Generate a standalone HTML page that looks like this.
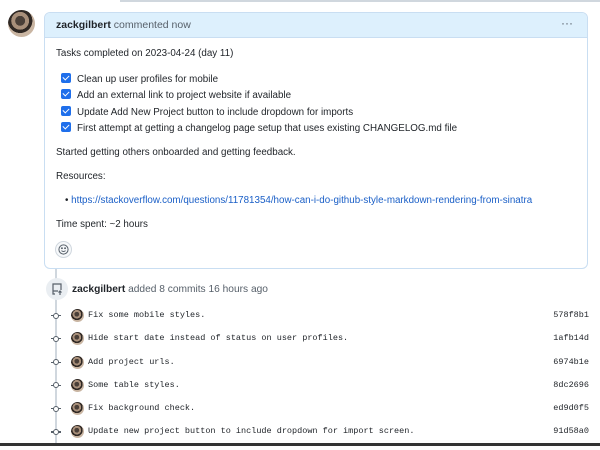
<!DOCTYPE html>
<html><head><style>
*{margin:0;padding:0;box-sizing:border-box}
body{width:600px;height:446px;background:#fff;font-family:"Liberation Sans",sans-serif;color:#1f2328;position:relative;overflow:hidden;font-size:9.8px}
.a{position:absolute}
.av{border-radius:50%;background:radial-gradient(circle at 45% 40%,#4a3f38 0 22%,#a88f7a 23% 40%,#2f2824 41% 55%,#c9b5a2 56% 75%,#8c7664 76%)}
.box{left:44px;top:12px;width:544px;height:257px;border:1px solid #c9def2;border-radius:6px;background:#fff}
.hd{left:0;top:0;right:0;height:25px;background:#ddf0fd;border-bottom:1px solid #c9def2;border-radius:5px 5px 0 0}
.cb{display:inline-block;width:10px;height:10px;background:#1f6feb;border-radius:2px;margin-right:6px;vertical-align:-1px;position:relative}
.cb:after{content:"";position:absolute;left:3px;top:1px;width:3px;height:5px;border:solid #fff;border-width:0 1.5px 1.5px 0;transform:rotate(45deg)}
.mono{font-family:"Liberation Mono",monospace;font-size:8.5px;color:#1f2328}
.r{position:relative;height:23.3px}
.ln{left:1px;top:5px;width:10px;height:1.2px;background:#57606a}
.ci{left:3px;top:2.5px;width:6px;height:6px;border:1.2px solid #57606a;border-radius:50%;background:#fff}
</style></head><body>
<div class="a" style="left:120px;top:0;width:480px;height:2px;background:#d0d7de"></div>
<div class="a av" style="left:8px;top:10px;width:27px;height:27px"></div>
<div class="a box">
 <div class="a hd"></div>
 <div class="a" style="left:11px;top:6px;font-size:10.5px"><b>zackgilbert</b> <span style="color:#57606a">commented now</span></div>
 <div class="a" style="right:14px;top:3px;font-size:12px;color:#57606a">···</div>
 <div class="a" style="left:11px;top:34px;line-height:14px">Tasks completed on 2023-04-24 (day 11)</div>
 <div class="a" style="left:16px;top:59px;line-height:16.3px">
  <div><span class="cb"></span>Clean up user profiles for mobile</div>
  <div><span class="cb"></span>Add an external link to project website if available</div>
  <div><span class="cb"></span>Update Add New Project button to include dropdown for imports</div>
  <div><span class="cb"></span>First attempt at getting a changelog page setup that uses existing CHANGELOG.md file</div>
 </div>
 <div class="a" style="left:11px;top:134px">Started getting others onboarded and getting feedback.</div>
 <div class="a" style="left:11px;top:158px">Resources:</div>
 <div class="a" style="left:20px;top:182px">• <span style="color:#1a5fc7">https://stackoverflow.com/questions/11781354/how-can-i-do-github-style-markdown-rendering-from-sinatra</span></div>
 <div class="a" style="left:11px;top:206px">Time spent: ~2 hours</div>
 <div class="a" style="left:10px;top:228px;width:17px;height:17px;border:1px solid #d0d7de;border-radius:50%;background:#f6f8fa"></div>
 <svg class="a" style="left:13px;top:231px" width="11" height="11" viewBox="0 0 12 12" fill="none" stroke="#57606a" stroke-width="1.1"><circle cx="6" cy="6" r="5"/><path d="M3.8 7.2q2.2 2 4.4 0"/><circle cx="4.3" cy="4.6" r=".5" fill="#57606a"/><circle cx="7.7" cy="4.6" r=".5" fill="#57606a"/></svg>
</div>
<div class="a" style="left:55px;top:269px;width:1.5px;height:177px;background:#d0d7de"></div>
<div class="a" style="left:46px;top:278px;width:22px;height:22px;border-radius:50%;background:#eaeef2"></div>
<svg class="a" style="left:50px;top:282px" width="14" height="14" viewBox="0 0 14 14" fill="none" stroke="#57606a" stroke-width="1.2"><path d="M5 12H3V2h8v6"/><path d="M3 9h5M10 13V9M8.5 10.5 10 9l1.5 1.5"/></svg>
<div class="a" style="left:72px;top:284px;font-size:10.2px"><b>zackgilbert</b> <span style="color:#57606a">added 8 commits 16 hours ago</span></div>
<div class="a" style="left:0;top:443px;width:600px;height:3px;background:#333"></div>
<div class="a" style="left:50px;top:310px;width:545px">
 <div class="r"><span class="a ln"></span><span class="a ci"></span><span class="a av" style="left:21px;top:-1px;width:13px;height:13px"></span><span class="a mono" style="left:38px;top:0">Fix some mobile styles.</span><span class="a mono" style="right:6px;top:0">578f8b1</span></div>
 <div class="r"><span class="a ln"></span><span class="a ci"></span><span class="a av" style="left:21px;top:-1px;width:13px;height:13px"></span><span class="a mono" style="left:38px;top:0">Hide start date instead of status on user profiles.</span><span class="a mono" style="right:6px;top:0">1afb14d</span></div>
 <div class="r"><span class="a ln"></span><span class="a ci"></span><span class="a av" style="left:21px;top:-1px;width:13px;height:13px"></span><span class="a mono" style="left:38px;top:0">Add project urls.</span><span class="a mono" style="right:6px;top:0">6974b1e</span></div>
 <div class="r"><span class="a ln"></span><span class="a ci"></span><span class="a av" style="left:21px;top:-1px;width:13px;height:13px"></span><span class="a mono" style="left:38px;top:0">Some table styles.</span><span class="a mono" style="right:6px;top:0">8dc2696</span></div>
 <div class="r"><span class="a ln"></span><span class="a ci"></span><span class="a av" style="left:21px;top:-1px;width:13px;height:13px"></span><span class="a mono" style="left:38px;top:0">Fix background check.</span><span class="a mono" style="right:6px;top:0">ed9d0f5</span></div>
 <div class="r"><span class="a ln"></span><span class="a ci"></span><span class="a av" style="left:21px;top:-1px;width:13px;height:13px"></span><span class="a mono" style="left:38px;top:0">Update new project button to include dropdown for import screen.</span><span class="a mono" style="right:6px;top:0">91d58a0</span></div>
</div>
</body></html>
